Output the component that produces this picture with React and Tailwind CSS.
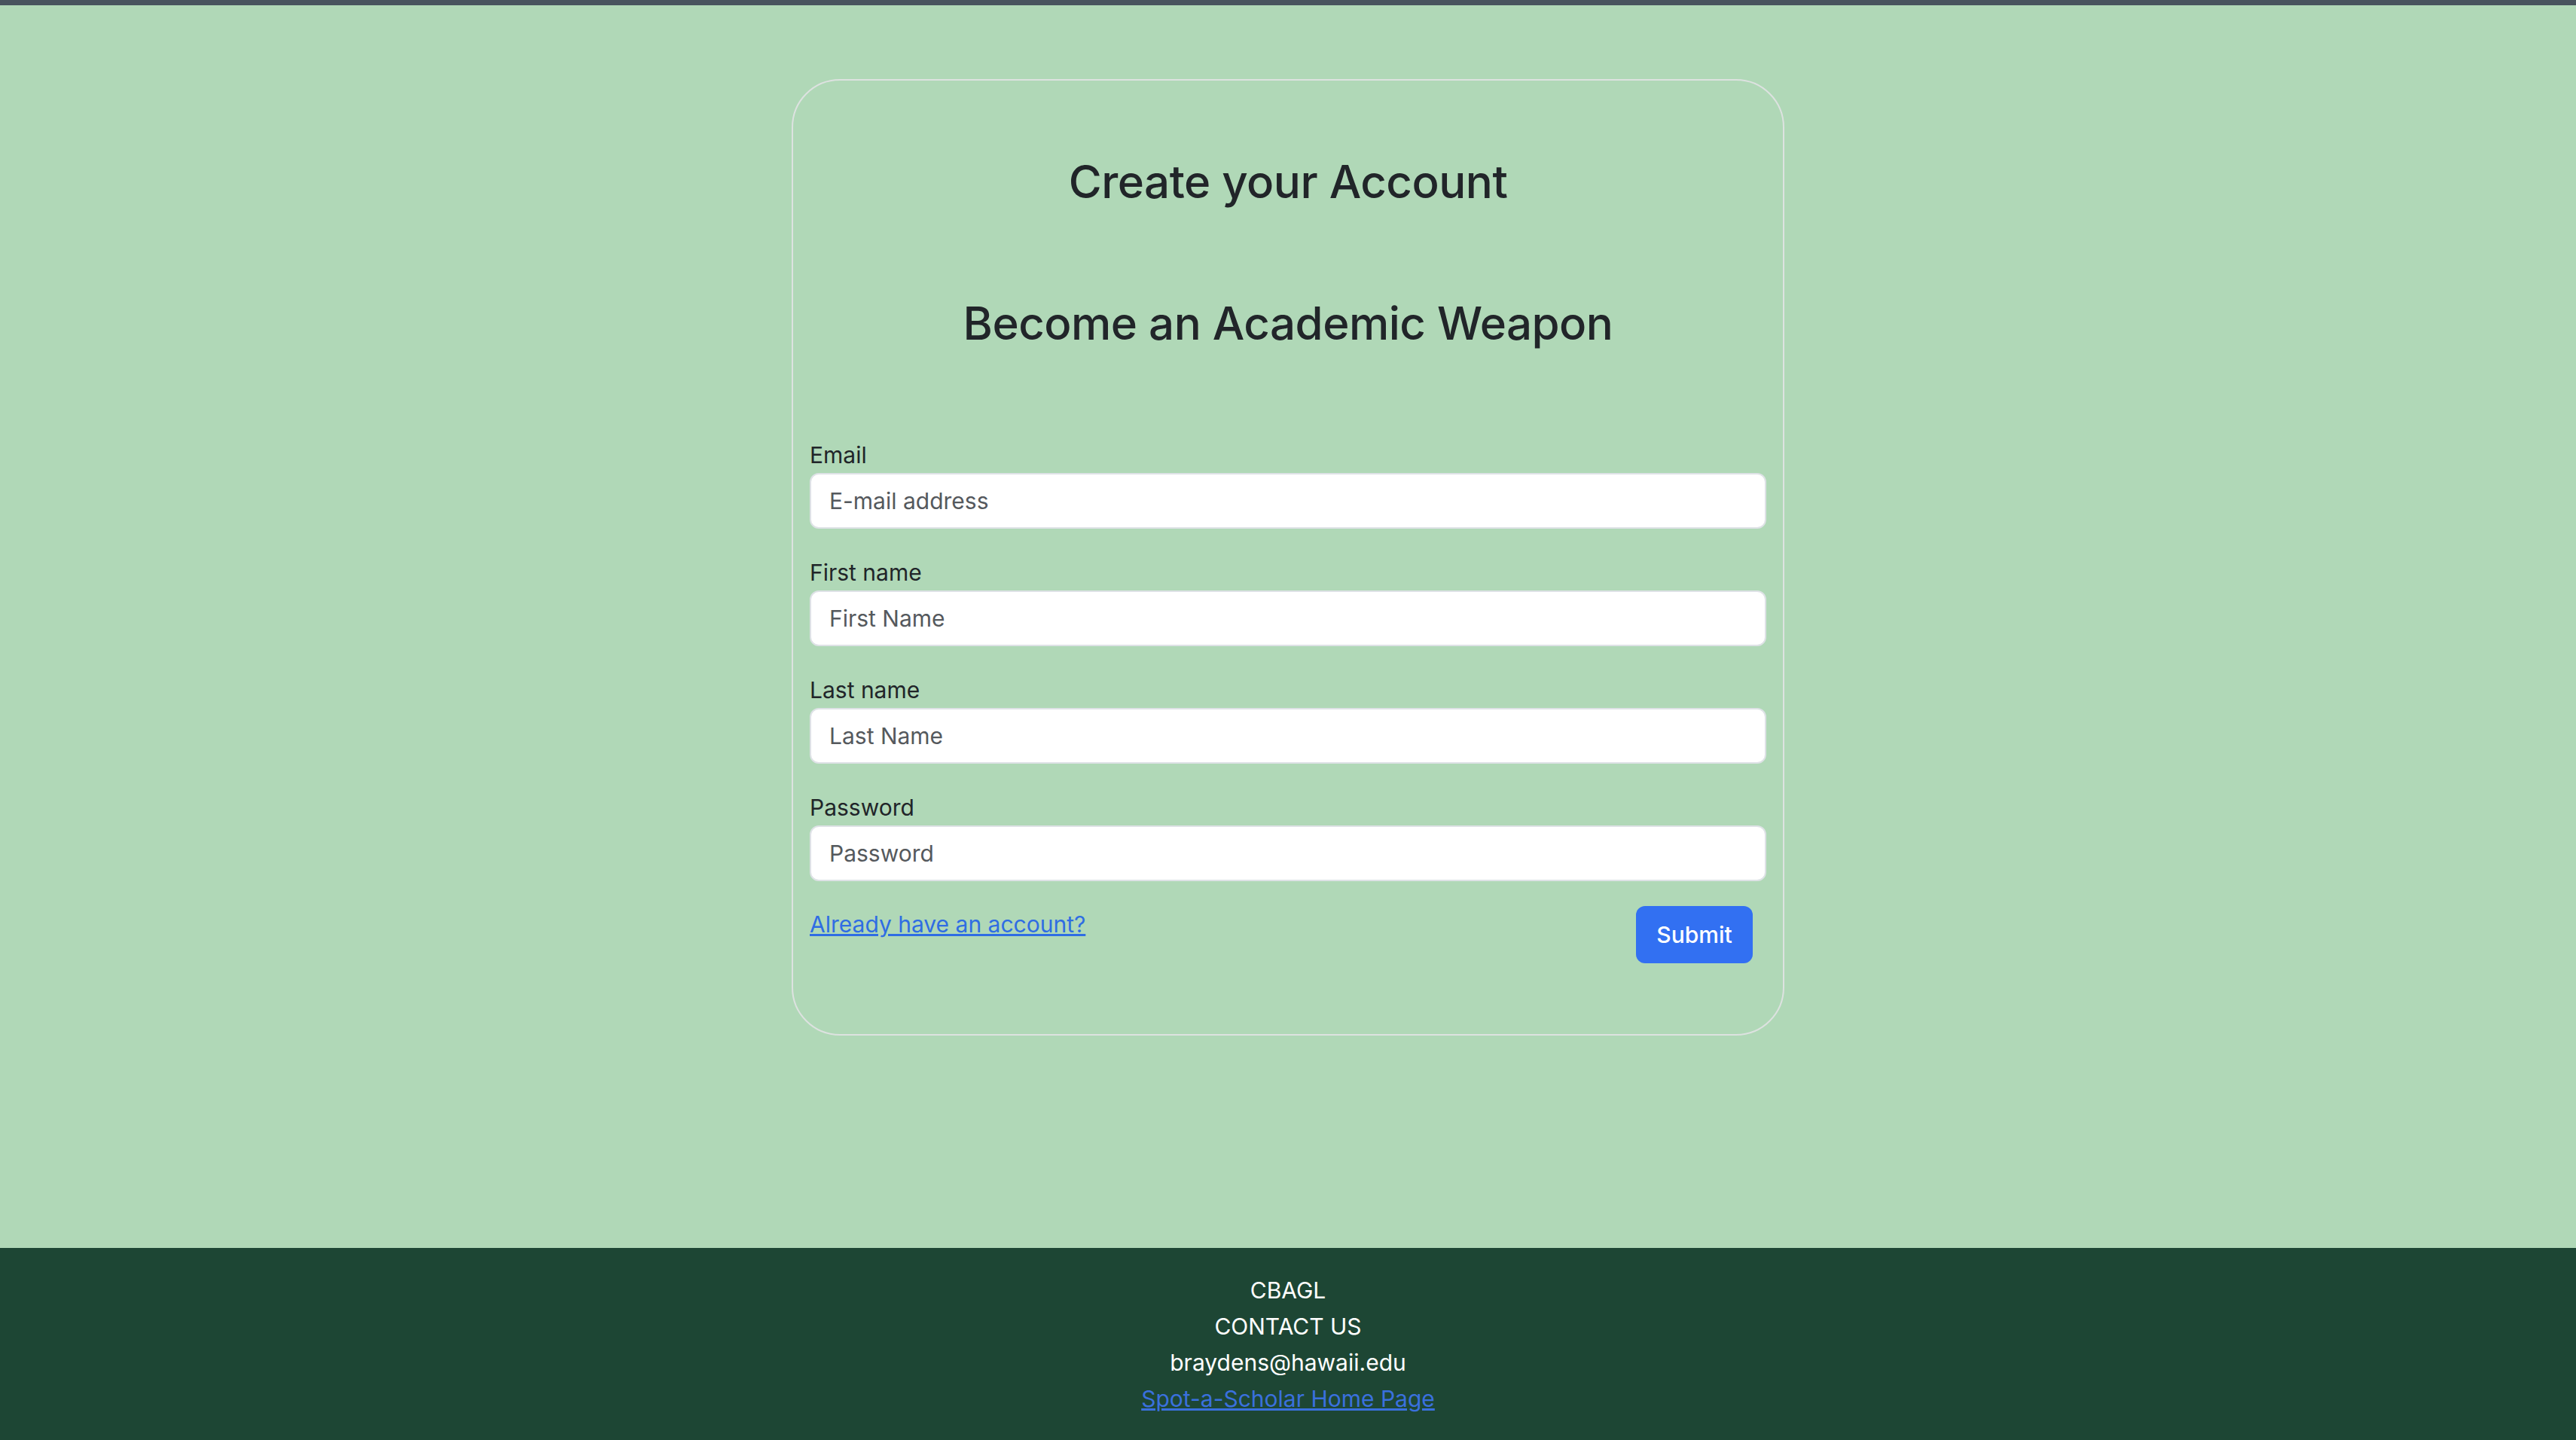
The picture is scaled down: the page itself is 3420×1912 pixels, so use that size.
import React from "react";

const fields = [
  { id: "email", label: "Email", placeholder: "E-mail address", type: "email" },
  { id: "firstName", label: "First name", placeholder: "First Name", type: "text" },
  { id: "lastName", label: "Last name", placeholder: "Last Name", type: "text" },
  { id: "password", label: "Password", placeholder: "Password", type: "password" },
];

function SignupCard() {
  return (
    <div className="w-[1318px] rounded-[64px] border-2 border-[#dde2e0] px-[22px] pt-[96px] pb-[94px]">
      <h2 className="text-center text-[60px] leading-[77px] font-medium tracking-[-0.5px] text-[#212529]">
        Create your Account
      </h2>
      <h2 className="mt-[111px] text-center text-[60px] leading-[77px] font-medium tracking-[-0.5px] text-[#212529]">
        Become an Academic Weapon
      </h2>
      <form className="mt-[112px] flex flex-col gap-[34px]" onSubmit={(e) => e.preventDefault()}>
        {fields.map((f) => (
          <div key={f.id} className="flex flex-col">
            <label htmlFor={f.id} className="text-[30px] leading-[48px] text-[#212529]">
              {f.label}
            </label>
            <input
              id={f.id}
              type={f.type}
              placeholder={f.placeholder}
              className="h-[74px] w-full rounded-[12px] border-2 border-[#dee2e6] bg-white px-[24px] text-[30px] text-[#212529] placeholder:text-[#55595d] outline-none"
            />
          </div>
        ))}
        <div className="-mt-[1px] flex items-start justify-between">
          <a href="#" className="text-[30px] leading-[48px] text-[#2f6de3] underline">
            Already have an account?
          </a>
          <button
            type="submit"
            className="mr-[18px] h-[76px] w-[155px] rounded-[12px] bg-[#3270f2] text-[30px] font-medium text-white"
          >
            Submit
          </button>
        </div>
      </form>
    </div>
  );
}

export default function App() {
  return (
    <div className="flex min-h-screen flex-col bg-[#b0d8b7] font-['Inter','Liberation_Sans',sans-serif]">
      <div className="h-[7px] bg-[#48545e]" />
      <main className="flex flex-1 items-start justify-center pt-[98px]">
        <SignupCard />
      </main>
      <footer className="flex h-[255px] flex-col items-center justify-center bg-[#1d4634] text-[30px] leading-[48px] text-white">
        <div>CBAGL</div>
        <div>CONTACT US</div>
        <div>braydens@hawaii.edu</div>
        <a href="#" className="text-[#3a70dd] underline">
          Spot-a-Scholar Home Page
        </a>
      </footer>
    </div>
  );
}
